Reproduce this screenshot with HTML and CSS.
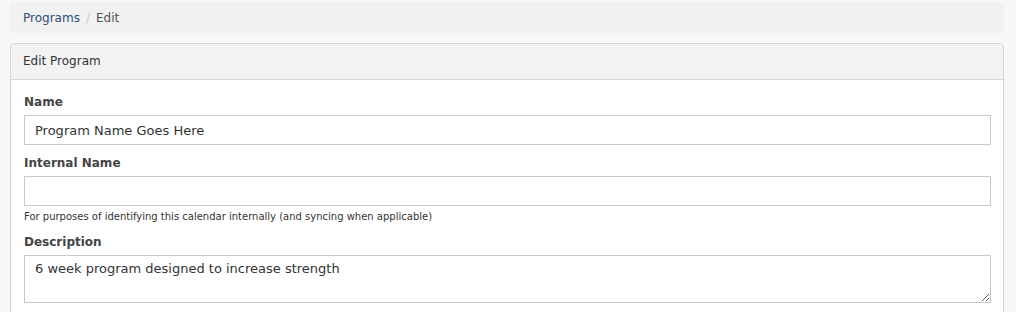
FILE: index.html
```html
<!DOCTYPE html>
<html lang="en">
<head>
    <meta charset="UTF-8">
    <meta name="viewport" content="width=device-width, initial-scale=1.0">
    <title>Edit Program</title>
    <link rel="stylesheet" href="styles.css">
</head>
<body>
    <div class="page">
        <nav class="breadcrumb">
            <a href="#">Programs</a>
            <span class="divider">/</span>
            <span class="current">Edit</span>
        </nav>

        <div class="card">
            <div class="card-header">Edit Program</div>
            <div class="card-body">
                <div class="form-group">
                    <label for="name">Name</label>
                    <input type="text" id="name" value="Program Name Goes Here">
                </div>
                <div class="form-group">
                    <label for="internal-name">Internal Name</label>
                    <input type="text" id="internal-name">
                    <small class="help-text">For purposes of identifying this calendar internally (and syncing when applicable)</small>
                </div>
                <div class="form-group">
                    <label for="description">Description</label>
                    <textarea id="description">6 week program designed to increase strength</textarea>
                </div>
            </div>
        </div>
    </div>
</body>
</html>
```

FILE: styles.css
```css
/* base */
body {
    font-family: "DejaVu Sans", sans-serif;
    font-size: 13px;
    color: #333;
    margin: 0;
    padding: 0;
    background: #f7f7f7;
}

.page {
    width: 994px;
    padding: 2px 0 0 10px;
}

/* breadcrumb */
.breadcrumb {
    display: flex;
    align-items: center;
    gap: 6px;
    height: 31px;
    padding: 0 13px;
    background: #f1f1f1;
    border-radius: 4px;
    font-size: 12px;
}

.breadcrumb a {
    color: #2d4f78;
    text-decoration: none;
}

.breadcrumb .divider {
    color: #cacaca;
}

.breadcrumb .current {
    color: #555;
}

/* card */
.card {
    margin-top: 10px;
    background: #fff;
    border: 1px solid #d6d6d6;
    border-radius: 4px;
    overflow: hidden;
}

.card-header {
    height: 35px;
    line-height: 35px;
    padding: 0 12px;
    background: #f2f2f2;
    border-bottom: 1px solid #d6d6d6;
    font-size: 12px;
    color: #333;
}

.card-body {
    padding: 15px 12px 30px 13px;
}

/* form */
.form-group {
    margin-bottom: 11px;
}

label {
    display: block;
    font-weight: bold;
    font-size: 12px;
    color: #444;
    margin-bottom: 6px;
}

input,
textarea {
    display: block;
    box-sizing: border-box;
    width: 967px;
    margin: 0;
    padding: 0 10px;
    font-family: inherit;
    font-size: 13px;
    color: #333;
    border: 1px solid #c9c9c9;
    border-radius: 0;
    background: #fff;
}

input {
    height: 30px;
}

textarea {
    height: 48px;
    padding-top: 5px;
    resize: vertical;
}

.help-text {
    display: block;
    margin-top: 5px;
    padding-bottom: 2px;
    font-size: 10px;
    color: #333;
}
```
